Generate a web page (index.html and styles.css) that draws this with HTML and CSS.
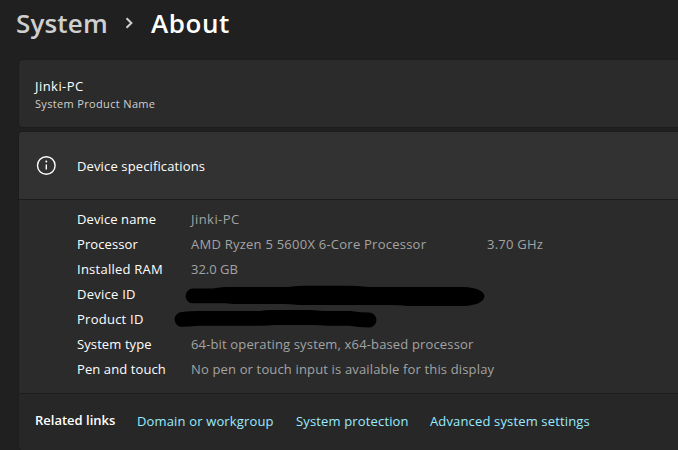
FILE: index.html
```html
<!DOCTYPE html>
<html lang="en">
<head>
<meta charset="utf-8">
<title>System - About</title>
<link rel="stylesheet" href="styles.css">
</head>
<body>
<header class="breadcrumb">
  <span class="parent">System</span>
  <svg class="chevron" width="10" height="14" viewBox="0 0 10 14"><path d="M2.500 2.200 7.400 7 2.500 11.800"/></svg>
  <h1>About</h1>
</header>
<main>
  <section class="card pc">
    <div class="pc-name">Jinki-PC</div>
    <div class="pc-model">System Product Name</div>
  </section>
  <section class="card specs">
    <div class="specs-head">
      <svg class="info" width="20" height="20" viewBox="0 0 20 20"><circle cx="10.300" cy="9.500" r="8.800"/><path d="M10.300 8.400v5.100"/><circle class="dot" cx="10.300" cy="5.600" r="1"/></svg>
      <h2>Device specifications</h2>
    </div>
    <dl class="spec-list">
      <dt>Device name</dt><dd class="name">Jinki-PC</dd>
      <dt>Processor</dt><dd class="cpu"><span class="model">AMD Ryzen 5 5600X 6-Core Processor</span><span class="clock">3.70 GHz</span></dd>
      <dt class="wide">Installed RAM</dt><dd class="ram">32.0 GB</dd>
      <dt class="wide">Device ID</dt><dd><svg class="mark" width="300" height="22" viewBox="0 0 300 22"><path d="M8 3.500 H28 Q34 2 41 2 H103 Q111 .7 122 .7 H162 Q172 .7 184 2 H278 Q299 3 299.500 11.500 Q298 20 278 21 H222 Q216 20 205 20 H114 Q105 19 99 19 H48 Q42 18.300 40 18.300 H8 A7.400 7.400 0 0 1 8 3.500Z"/></svg></dd>
      <dt class="wide">Product ID</dt><dd><svg class="mark second" width="204" height="20" viewBox="0 0 204 20"><path d="M8 2 Q15 1 24 1 H86 Q91 0 98 0 H138 Q145 1 153 1 H177 Q186 2.500 195 2.500 A7.300 7.300 0 0 1 195 17.500 Q185 17.500 175 15.800 H153 Q146 15 138 15 H101 Q94 15.800 86 15.800 H24 Q15 16.800 8 16.800 A7.300 7.300 0 0 1 8 2Z"/></svg></dd>
      <dt>System type</dt><dd>64-bit operating system, x64-based processor</dd>
      <dt>Pen and touch</dt><dd>No pen or touch input is available for this display</dd>
    </dl>
    <nav class="links">
      <strong>Related links</strong>
      <a class="domain">Domain or workgroup</a>
      <a class="protection">System protection</a>
      <a class="advanced">Advanced system settings</a>
    </nav>
  </section>
</main>
</body>
</html>
```
FILE: styles.css
```css
* { box-sizing: border-box; margin: 0; }
body {
  height: 450px;
  overflow: hidden;
  background: #202020;
  color: #fff;
  font: 13px/20px "Open Sans", "Noto Sans", sans-serif;
  white-space: nowrap;
}
.breadcrumb {
  display: flex;
  height: 60px;
  padding-left: 16px;
  line-height: 46px;
  font-size: 26px;
  font-weight: 600;
  letter-spacing: .15px;
}
.parent { width: 108px; color: #cfcfcf; }
.chevron { margin-top: 16px; }
.chevron path { fill: none; stroke: #cfcfcf; stroke-width: 2; }
h1 { margin-left: 17px; font-size: 26px; font-weight: 600; letter-spacing: .55px; }
main { padding-left: 19px; }
.card { background: #2b2b2b; border-radius: 4px 0 0 4px; box-shadow: 0 0 0 1px #1d1d1d; }
.pc { height: 67px; padding: 16px 0 0 16px; margin-bottom: 5px; }
.pc-name { letter-spacing: .45px; }
.pc-model { font-size: 11px; line-height: 16px; color: #cfcfcf; letter-spacing: .34px; }
.specs { overflow: hidden; }
.specs-head {
  display: flex;
  align-items: center;
  height: 68px;
  padding-left: 17px;
  gap: 21px;
  background: #323232;
  border-bottom: 1px solid #1d1d1d;
}
.info { stroke: #fff; stroke-width: 1.4; fill: none; }
.info .dot { fill: #fff; stroke: none; }
h2 { font-size: 13px; font-weight: 400; letter-spacing: .13px; }
.spec-list {
  display: grid;
  grid-template-columns: 114px 1fr;
  grid-auto-rows: 25px;
  height: 194px;
  padding: 7px 0 0 58px;
  line-height: 25px;
  border-bottom: 1px solid #1d1d1d;
}
dt { letter-spacing: .1px; }
.wide { letter-spacing: .25px; }
dd { color: #a3a3a3; letter-spacing: .15px; }
.name { letter-spacing: .45px; }
.ram { letter-spacing: 0; }
.cpu { display: flex; letter-spacing: .24px; }
.model { width: 296px; }
.mark { display: block; margin: 3px 0 0 -6px; fill: #000; }
.mark.second { margin: 3px 0 0 -17px; }
.links { display: flex; height: 56px; padding: 16px 0 0 16px; background: #272727; }
.links strong { width: 102px; font-weight: 600; }
.links a { color: #99ebff; padding-top: 1px; letter-spacing: .15px; }
.domain { width: 159px; }
.protection { width: 134px; }
```
